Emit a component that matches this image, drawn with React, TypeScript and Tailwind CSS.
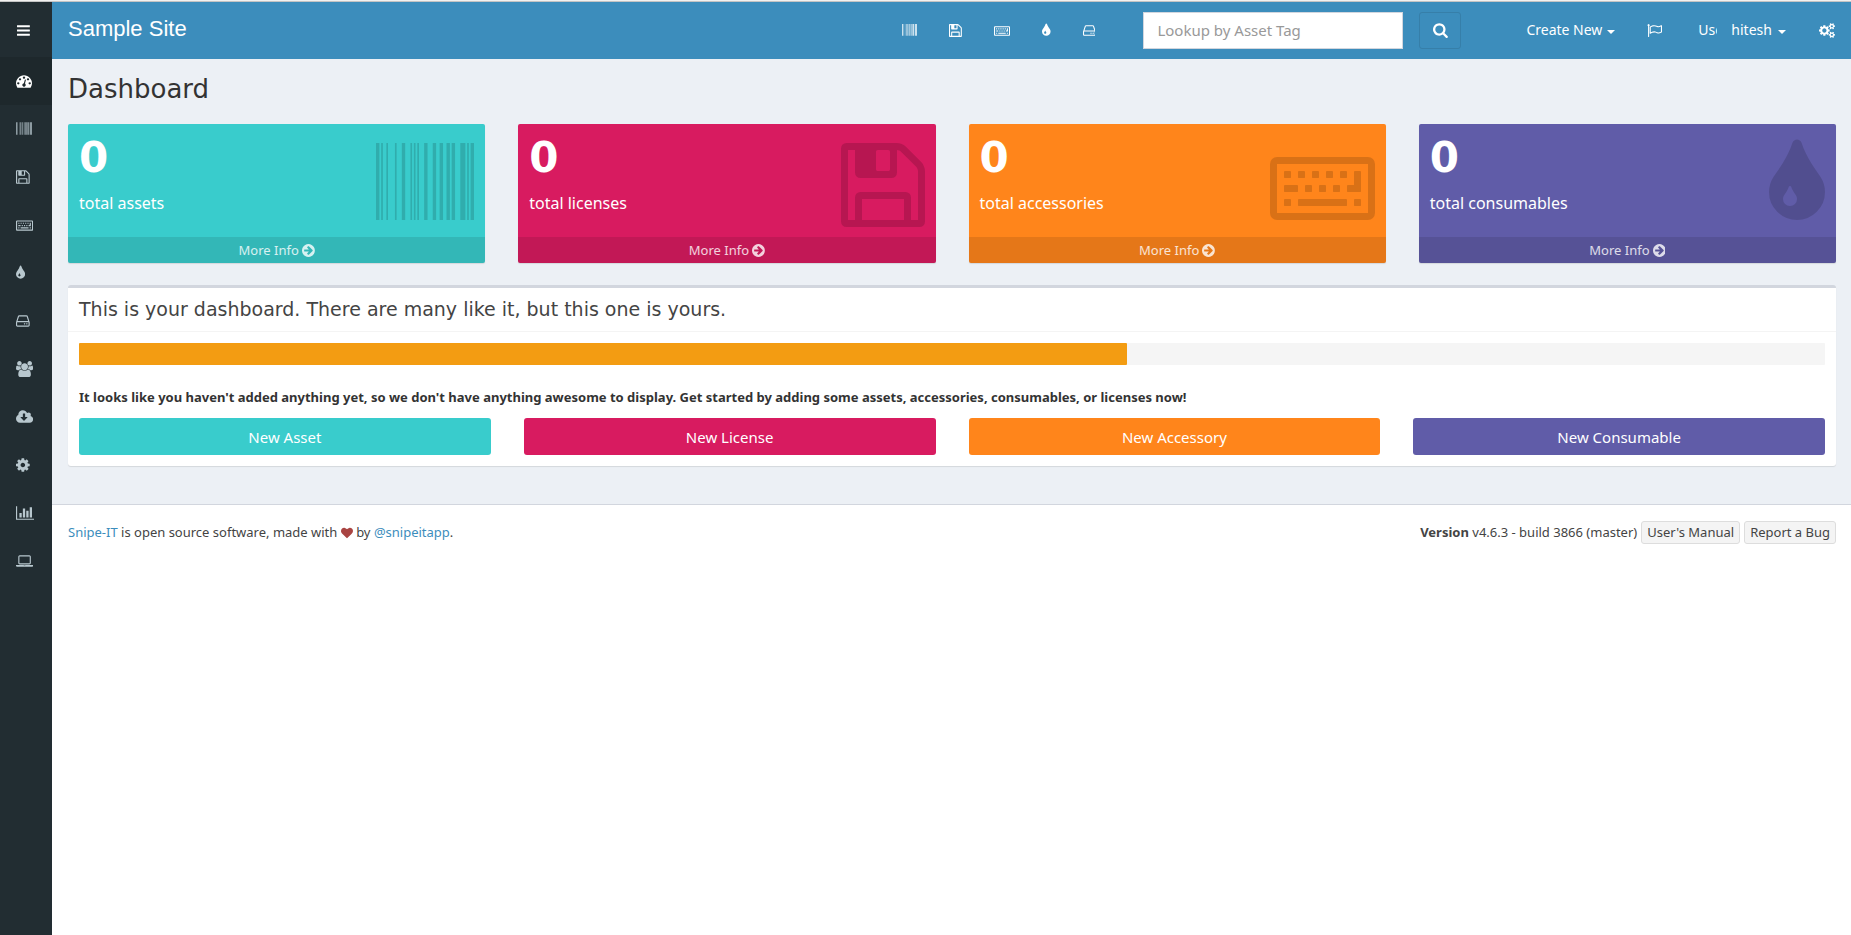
import React from "react";

type Glyph = { w: number; d: string };

const dot = (x: number, y: number) =>
  `M${x} ${y}v-96q0 -16 -16 -16h-96q-16 0 -16 16v96q0 16 16 16h96q16 0 16 -16z`;
const gauge = (x: number, y: number) =>
  `M${x} ${y}q0 53 -37.5 90.5t-90.5 37.5t-90.5 -37.5t-37.5 -90.5t37.5 -90.5t90.5 -37.5t90.5 37.5t37.5 90.5z`;
const line = (y: number) =>
  `M1536 ${y}v-128q0 -26 -19 -45t-45 -19h-1408q-26 0 -45 19t-19 45v128q0 26 19 45t45 19h1408q26 0 45 -19t19 -45z`;
const led = (x: number) =>
  `M${x} 320q0 -33 -23.5 -56.5t-56.5 -23.5t-56.5 23.5t-23.5 56.5t23.5 56.5t56.5 23.5t56.5 -23.5t23.5 -56.5z`;
const smallCog = (y: number) =>
  `M1920 ${y}v-140q0 -16 -149 -31q-12 -27 -30 -52q51 -113 51 -138q0 -4 -4 -7q-122 -71 -124 -71q-8 0 -46 47t-52 68q-20 -2 -30 -2t-30 2q-14 -21 -52 -68t-46 -47q-2 0 -124 71q-4 3 -4 7q0 25 51 138q-18 25 -30 52q-149 15 -149 31v140q0 16 149 31q13 29 30 52q-51 113 -51 138q0 4 4 7q4 2 35 20t59 34t30 16q8 0 46 -46.5t52 -67.5q20 2 30 2t30 -2q51 71 92 112l6 2q4 0 124 -70q4 -3 4 -7q0 -25 -51 -138q17 -23 30 -52q149 -15 149 -31z`;
const smallHole = (y: number) =>
  `M1664 ${y}q0 52 -38 90t-90 38t-90 -38t-38 -90q0 -53 37.5 -90.5t90.5 -37.5t90.5 37.5t37.5 90.5z`;

const glyphs = {
  bars: { w: 1536, d: line(192) + line(704) + line(1216) },
  dashboard: {
    w: 1792,
    d:
      gauge(384, 384) + gauge(576, 832) + gauge(1664, 384) + gauge(1024, 1024) + gauge(1472, 832) +
      "M1004 351l101 382q6 26 -7.5 48.5t-38.5 29.5t-48 -6.5t-30 -39.5l-101 -382q-60 -5 -107 -43.5t-63 -98.5q-20 -77 20 -146t117 -89t146 20t89 117q16 60 -6 117t-72 91zM1792 384q0 -261 -141 -483q-19 -29 -54 -29h-1402q-35 0 -54 29q-141 221 -141 483q0 182 71 348t191 286t286 191t348 71t348 -71t286 -191t191 -286t71 -348z",
  },
  barcode: {
    w: 1792,
    d: "M63 0h-63v1408h63v-1408zM126 1h-32v1407h32v-1407zM220 1h-31v1407h31v-1407zM377 1h-31v1407h31v-1407zM534 1h-62v1407h62v-1407zM660 1h-31v1407h31v-1407zM723 1h-31v1407h31v-1407zM786 1h-31v1407h31v-1407zM943 1h-63v1407h63v-1407zM1100 1h-63v1407h63v-1407zM1226 1h-63v1407h63v-1407zM1352 1h-63v1407h63v-1407zM1446 1h-63v1407h63v-1407zM1635 1h-94v1407h94v-1407zM1698 1h-32v1407h32v-1407zM1792 0h-63v1408h63v-1408z",
  },
  floppy: {
    w: 1536,
    d: "M384 0h768v384h-768v-384zM1280 0h128v896q0 14 -10 38.5t-20 34.5l-281 281q-10 10 -34 20t-39 10v-416q0 -40 -28 -68t-68 -28h-576q-40 0 -68 28t-28 68v416h-128v-1280h128v416q0 40 28 68t68 28h832q40 0 68 -28t28 -68v-416zM896 928v320q0 13 -9.5 22.5t-22.5 9.5h-192q-13 0 -22.5 -9.5t-9.5 -22.5v-320q0 -13 9.5 -22.5t22.5 -9.5h192q13 0 22.5 9.5t9.5 22.5zM1536 896v-928q0 -40 -28 -68t-68 -28h-1344q-40 0 -68 28t-28 68v1344q0 40 28 68t68 28h928q40 0 88 -20t76 -48l280 -280q28 -28 48 -76t20 -88z",
  },
  keyboard: {
    w: 1920,
    d:
      dot(384, 368) + dot(384, 880) + dot(640, 880) + dot(896, 880) + dot(1152, 880) + dot(1408, 880) +
      dot(768, 624) + dot(1024, 624) + dot(1280, 624) + dot(1664, 368) +
      "M512 624v-96q0 -16 -16 -16h-224q-16 0 -16 16v96q0 16 16 16h224q16 0 16 -16zM1408 368v-96q0 -16 -16 -16h-864q-16 0 -16 16v96q0 16 16 16h864q16 0 16 -16zM1664 880v-352q0 -16 -16 -16h-224q-16 0 -16 16v96q0 16 16 16h112v240q0 16 16 16h96q16 0 16 -16zM1792 128v896h-1664v-896h1664zM1920 1024v-896q0 -53 -37.5 -90.5t-90.5 -37.5h-1664q-53 0 -90.5 37.5t-37.5 90.5v896q0 53 37.5 90.5t90.5 37.5h1664q53 0 90.5 -37.5t37.5 -90.5z",
  },
  tint: {
    w: 1024,
    d: "M512 384q0 36 -20 69q-1 1 -15.5 22.5t-25.5 38t-25 44t-21 50.5q-4 16 -21 16t-21 -16q-7 -23 -21 -50.5t-25 -44t-25.5 -38t-15.5 -22.5q-20 -33 -20 -69q0 -53 37.5 -90.5t90.5 -37.5t90.5 37.5t37.5 90.5zM1024 512q0 -212 -150 -362t-362 -150t-362 150t-150 362q0 145 81 275q6 9 62.5 90.5t101 151t99.5 178t83 201.5q9 30 34 47t51 17t51.5 -17t33.5 -47q28 -93 83 -201.5t99.5 -178t101 -151t62.5 -90.5q81 -127 81 -275z",
  },
  hdd: {
    w: 1536,
    d:
      led(1040) + led(1296) +
      "M1408 160v320q0 13 -9.5 22.5t-22.5 9.5h-1216q-13 0 -22.5 -9.5t-9.5 -22.5v-320q0 -13 9.5 -22.5t22.5 -9.5h1216q13 0 22.5 9.5t9.5 22.5zM178 640h1180l-157 482q-4 13 -16 21.5t-26 8.5h-782q-14 0 -26 -8.5t-16 -21.5zM1536 480v-320q0 -66 -47 -113t-113 -47h-1216q-66 0 -113 47t-47 113v320q0 25 16 75l197 606q17 53 63 86t101 33h782q55 0 101 -33t63 -86l197 -606q16 -50 16 -75z",
  },
  users: {
    w: 1920,
    d: "M593 640q-162 -5 -265 -128h-134q-82 0 -138 40.5t-56 118.5q0 353 124 353q6 0 43.5 -21t97.5 -42.5t119 -21.5q67 0 133 23q-5 -37 -5 -66q0 -139 81 -256zM1664 3q0 -120 -73 -189.5t-194 -69.5h-874q-121 0 -194 69.5t-73 189.5q0 53 3.5 103.5t14 109t26.5 108.5t43 97.5t62 81t85.5 53.5t111.5 20q10 0 43 -21.5t73 -48t107 -48t135 -21.5t135 21.5t107 48t73 48t43 21.5q61 0 111.5 -20t85.5 -53.5t62 -81t43 -97.5t26.5 -108.5t14 -109t3.5 -103.5zM640 1280q0 -106 -75 -181t-181 -75t-181 75t-75 181t75 181t181 75t181 -75t75 -181zM1344 896q0 -159 -112.5 -271.5t-271.5 -112.5t-271.5 112.5t-112.5 271.5t112.5 271.5t271.5 112.5t271.5 -112.5t112.5 -271.5zM1920 671q0 -78 -56 -118.5t-138 -40.5h-134q-103 123 -265 128q81 117 81 256q0 29 -5 66q66 -23 133 -23q59 0 119 21.5t97.5 42.5t43.5 21q124 0 124 -353zM1792 1280q0 -106 -75 -181t-181 -75t-181 75t-75 181t75 181t181 75t181 -75t75 -181z",
  },
  cloud: {
    w: 1920,
    d: "M1280 608q0 14 -9 23t-23 9h-224v352q0 13 -9.5 22.5t-22.5 9.5h-192q-13 0 -22.5 -9.5t-9.5 -22.5v-352h-224q-13 0 -22.5 -9.5t-9.5 -22.5q0 -14 9 -23l352 -352q9 -9 23 -9t23 9l351 351q10 12 10 24zM1920 384q0 -159 -112.5 -271.5t-271.5 -112.5h-1088q-185 0 -316.5 131.5t-131.5 316.5q0 130 70 240t188 165q-2 30 -2 43q0 212 150 362t362 150q156 0 285.5 -87t188.5 -231q71 62 166 62q106 0 181 -75t75 -181q0 -76 -41 -138q130 -31 213.5 -135.5t83.5 -238.5z",
  },
  cog: {
    w: 1536,
    d: "M1024 640q0 106 -75 181t-181 75t-181 -75t-75 -181t75 -181t181 -75t181 75t75 181zM1536 749v-222q0 -12 -8 -23t-20 -13l-185 -28q-19 -54 -39 -91q35 -50 107 -138q10 -12 10 -25t-9 -23q-27 -37 -99 -108t-94 -71q-12 0 -26 9l-138 108q-44 -23 -91 -38q-16 -136 -29 -186q-7 -28 -36 -28h-222q-14 0 -24.5 8.5t-11.5 21.5l-28 184q-49 16 -90 37l-141 -107q-10 -9 -25 -9q-14 0 -25 11q-126 114 -165 168q-7 10 -7 23q0 12 8 23q15 21 51 66.5t54 70.5q-27 50 -41 99l-183 27q-13 2 -21 12.5t-8 23.5v222q0 12 8 23t19 13l186 28q14 46 39 92q-40 57 -107 138q-10 12 -10 24q0 10 9 23q26 36 98.5 107.5t94.5 71.5q13 0 26 -10l138 -107q44 23 91 38q16 136 29 186q7 28 36 28h222q14 0 24.5 -8.5t11.5 -21.5l28 -184q49 -16 90 -37l142 107q9 9 24 9q13 0 25 -10q129 -119 165 -170q7 -8 7 -22q0 -12 -8 -23q-15 -21 -51 -66.5t-54 -70.5q26 -50 41 -98l183 -28q13 -2 21 -12.5t8 -23.5z",
  },
  chart: {
    w: 2048,
    d: "M640 640v-512h-256v512h256zM1024 1152v-1024h-256v1024h256zM2048 0v-128h-2048v1536h128v-1408h1920zM1408 896v-768h-256v768h256zM1792 1280v-1152h-256v1152h256z",
  },
  laptop: {
    w: 1920,
    d: "M416 256q-66 0 -113 47t-47 113v704q0 66 47 113t113 47h1088q66 0 113 -47t47 -113v-704q0 -66 -47 -113t-113 -47h-1088zM384 1120v-704q0 -13 9.5 -22.5t22.5 -9.5h1088q13 0 22.5 9.5t9.5 22.5v704q0 13 -9.5 22.5t-22.5 9.5h-1088q-13 0 -22.5 -9.5t-9.5 -22.5zM1760 192h160v-96q0 -40 -47 -68t-113 -28h-1600q-66 0 -113 28t-47 68v96h160h1600zM1040 96q16 0 16 16t-16 16h-160q-16 0 -16 -16t16 -16h160z",
  },
  search: {
    w: 1664,
    d: "M1152 704q0 185 -131.5 316.5t-316.5 131.5t-316.5 -131.5t-131.5 -316.5t131.5 -316.5t316.5 -131.5t316.5 131.5t131.5 316.5zM1664 -128q0 -52 -38 -90t-90 -38q-54 0 -90 38l-343 342q-179 -124 -399 -124q-143 0 -273.5 55.5t-225 150t-150 225t-55.5 273.5t55.5 273.5t150 225t225 150t273.5 55.5t273.5 -55.5t225 -150t150 -225t55.5 -273.5q0 -220 -124 -399l343 -343q37 -37 37 -90z",
  },
  flag: {
    w: 1792,
    d: "M1664 491v616q-169 -91 -306 -91q-82 0 -145 32q-100 49 -184 76.5t-178 27.5q-173 0 -403 -127v-599q245 113 433 113q55 0 103.5 -7.5t98 -26t77 -31t82.5 -39.5l28 -14q44 -22 101 -22q120 0 293 92zM320 1280q0 -35 -17.5 -64t-46.5 -46v-1266q0 -14 -9 -23t-23 -9h-64q-14 0 -23 9t-9 23v1266q-29 17 -46.5 46t-17.5 64q0 53 37.5 90.5t90.5 37.5t90.5 -37.5t37.5 -90.5zM1792 1216v-763q0 -39 -35 -57q-10 -5 -17 -9q-218 -116 -369 -116q-88 0 -158 35l-28 14q-64 33 -99 48t-91 29t-114 14q-102 0 -235.5 -44t-228.5 -102q-15 -9 -33 -9q-16 0 -32 8q-32 19 -32 56v742q0 35 31 55q35 21 78.5 42.5t114 52t152.5 49.5t155 19q112 0 209 -31t209 -86q38 -19 89 -19q122 0 310 112q22 12 31 17q31 16 62 -2q31 -20 31 -55z",
  },
  cogs: {
    w: 1920,
    d:
      "M896 640q0 106 -75 181t-181 75t-181 -75t-75 -181t75 -181t181 -75t181 75t75 181zM1280 731v-185q0 -10 -7 -19.5t-16 -10.5l-155 -24q-11 -35 -32 -76q34 -48 90 -115q7 -11 7 -20q0 -12 -7 -19q-23 -30 -82.5 -89.5t-78.5 -59.5q-11 0 -21 7l-115 90q-37 -19 -77 -31q-11 -108 -23 -155q-7 -24 -30 -24h-186q-11 0 -20 7.5t-10 17.5l-23 153q-34 10 -75 31l-118 -89q-7 -7 -20 -7q-11 0 -21 8q-144 133 -144 160q0 9 7 19q10 14 41 53t47 61q-23 44 -35 82l-152 24q-10 1 -17 9.5t-7 19.5v185q0 10 7 19.5t16 10.5l155 24q11 35 32 76q-34 48 -90 115q-7 11 -7 20q0 12 7 20q22 30 82 89t79 59q11 0 21 -7l115 -90q34 18 77 32q11 108 23 154q7 24 30 24h186q11 0 20 -7.5t10 -17.5l23 -153q34 -10 75 -31l118 89q8 7 20 7q11 0 21 -8q144 -133 144 -160q0 -8 -7 -19q-12 -16 -42 -54t-45 -60q23 -48 34 -82l152 -23q10 -2 17 -10.5t7 -19.5z" +
      smallHole(128) + smallHole(1152) + smallCog(198) + smallCog(1222),
  },
  arrow: {
    w: 1536,
    d: "M1285 640q0 27 -18 45l-91 91l-362 362q-18 18 -45 18t-45 -18l-91 -91q-18 -18 -18 -45t18 -45l189 -189h-502q-26 0 -45 -19t-19 -45v-128q0 -26 19 -45t45 -19h502l-189 -189q-19 -19 -19 -45t19 -45l91 -91q18 -18 45 -18t45 18l362 362l91 91q18 18 18 45zM1536 640q0 -209 -103 -385.5t-279.5 -279.5t-385.5 -103t-385.5 103t-279.5 279.5t-103 385.5t103 385.5t279.5 279.5t385.5 103t385.5 -103t279.5 -279.5t103 -385.5z",
  },
  heart: {
    w: 1792,
    d: "M896 -128q-26 0 -44 18l-624 602q-10 8 -27.5 26t-55.5 65.5t-68 97.5t-53.5 121t-23.5 138q0 220 127 344t351 124q62 0 126.5 -21.5t120 -58t95.5 -68.5t76 -68q36 36 76 68t95.5 68.5t120 58t126.5 21.5q224 0 351 -124t127 -344q0 -221 -229 -450l-623 -600q-18 -18 -44 -18z",
  },
} satisfies Record<string, Glyph>;

type IconName = keyof typeof glyphs;

function Icon({ name, className = "h-4" }: { name: IconName; className?: string }) {
  const g = glyphs[name];
  return (
    <svg viewBox={`0 0 ${g.w} 1792`} className={`w-auto shrink-0 ${className}`} fill="currentColor" fillRule="evenodd" aria-hidden="true">
      <path transform="translate(0 1536) scale(1 -1)" d={g.d} />
    </svg>
  );
}

const nav: { icon: IconName; label: string }[] = [
  { icon: "dashboard", label: "Dashboard" },
  { icon: "barcode", label: "Assets" },
  { icon: "floppy", label: "Licenses" },
  { icon: "keyboard", label: "Accessories" },
  { icon: "tint", label: "Consumables" },
  { icon: "hdd", label: "Components" },
  { icon: "users", label: "People" },
  { icon: "cloud", label: "Import" },
  { icon: "cog", label: "Settings" },
  { icon: "chart", label: "Reports" },
  { icon: "laptop", label: "Requestable" },
];

const cards: { label: string; icon: IconName; bg: string; action: string }[] = [
  { label: "total assets", icon: "barcode", bg: "bg-[#39cccc]", action: "New Asset" },
  { label: "total licenses", icon: "floppy", bg: "bg-[#d81b60]", action: "New License" },
  { label: "total accessories", icon: "keyboard", bg: "bg-[#ff851b]", action: "New Accessory" },
  { label: "total consumables", icon: "tint", bg: "bg-[#605ca8]", action: "New Consumable" },
];

function Caret() {
  return <span className="mt-1 border-x-4 border-t-4 border-x-transparent border-t-white" />;
}

function Sidebar() {
  return (
    <aside className="flex w-[52px] shrink-0 flex-col bg-[#222d32] text-[#b8c7ce]">
      <button aria-label="Toggle navigation" className="flex h-[55px] items-center pl-[17px] pt-px text-white">
        <Icon name="bars" className="h-[15px]" />
      </button>
      <nav className="flex flex-col">
        {nav.map((n, i) => (
          <a key={n.icon} href="#" aria-label={n.label} className={`flex h-12 items-center pl-4 ${i === 0 ? "bg-[#1e282c] text-white" : ""}`}>
            <Icon name={n.icon} />
          </a>
        ))}
      </nav>
    </aside>
  );
}

function Header() {
  return (
    <header className="flex h-[57px] items-center bg-[#3c8dbc] px-4 pb-px text-sm text-white">
      <a href="#" className="pb-[2px] font-['Liberation_Sans',sans-serif] text-[22px] leading-[30px]">Sample Site</a>
      <nav className="ml-auto flex items-center">
        <div className="flex items-center gap-8">
          {(["barcode", "floppy", "keyboard", "tint", "hdd"] as IconName[]).map((n) => (
            <a key={n} href="#" aria-label={n}><Icon name={n} className="h-[15px]" /></a>
          ))}
        </div>
        <form className="ml-12 flex items-center gap-4" onSubmit={(e) => e.preventDefault()}>
          <input aria-label="Lookup by Asset Tag" placeholder="Lookup by Asset Tag" className="h-[37px] w-[260px] border border-[#d2d6de] bg-white px-[13px] text-[15px] text-[#555] placeholder:text-[#999] placeholder:opacity-100" />
          <button aria-label="Search" className="flex h-[37px] w-[42px] items-center justify-center rounded-[3px] border border-[#367fa9]">
            <Icon name="search" className="h-4" />
          </button>
        </form>
        <button className="ml-[65px] flex items-center gap-[5px]">Create New <Caret /></button>
        <a href="#" aria-label="Requests" className="ml-8"><Icon name="flag" className="h-[15px]" /></a>
        <button className="ml-9 flex items-center">
          <span className="w-[19px] overflow-hidden whitespace-nowrap text-left">User</span>
          <span className="ml-[14px] mr-[6px]">hitesh</span>
          <Caret />
        </button>
        <a href="#" aria-label="Admin" className="ml-[33px]"><Icon name="cogs" className="h-[15px]" /></a>
      </nav>
    </header>
  );
}

export default function App() {
  return (
    <div className="flex min-h-screen flex-col bg-white font-['Noto_Sans',sans-serif] text-[13px] text-[#333]">
      <div className="h-[2px] border-b border-[#c4c4c4] bg-[#f2f1f0]" />
      <div className="flex grow">
        <Sidebar />
        <div className="min-w-0 grow">
          <Header />
          <main className="bg-[#ecf0f5] pb-[38px] pl-4 pr-[15px] pt-[13px]">
            <h1 className="font-['DejaVu_Sans',sans-serif] text-[26px] leading-[34px]">Dashboard</h1>
            <div className="mt-[18px] grid grid-cols-4 gap-[33px]">
              {cards.map((c) => (
                <section key={c.label} className={`relative overflow-hidden rounded-[2px] text-white shadow-[0_1px_1px_rgba(0,0,0,0.1)] ${c.bg}`}>
                  <div className="h-[113px] px-[11px] pt-[11px]">
                    <p className="font-['DejaVu_Sans',sans-serif] text-[42px] font-bold leading-[46px]">0</p>
                    <p className="mt-[10px] text-base leading-6">{c.label}</p>
                  </div>
                  <div className="absolute right-[11px] top-3 text-black/15">
                    <Icon name={c.icon} className="h-[98px]" />
                  </div>
                  <a href="#" className="flex h-[26px] items-center justify-center gap-[3px] bg-black/10 pt-px text-white/80">
                    More Info <Icon name="arrow" className="h-[15px]" />
                  </a>
                </section>
              ))}
            </div>
            <section className="mt-[22px] rounded-[3px] border-t-3 border-[#d2d6de] bg-white shadow-[0_1px_1px_rgba(0,0,0,0.1)]">
              <h2 className="border-b border-[#f4f4f4] px-[11px] py-[10px] font-['DejaVu_Sans',sans-serif] text-[19px] leading-[23px] text-[#444]">
                This is your dashboard. There are many like it, but this one is yours.
              </h2>
              <div className="p-[11px]">
                <div role="progressbar" aria-valuenow={60} aria-label="Setup progress" className="h-[22px] rounded-[1px] bg-[#f5f5f5]">
                  <div className="h-full w-3/5 rounded-[1px] bg-[#f39c12]" />
                </div>
                <p className="mt-[22px] font-bold leading-5">
                  It looks like you haven't added anything yet, so we don't have anything awesome to display. Get started by adding some assets, accessories, consumables, or licenses now!
                </p>
                <div className="mt-[11px] grid grid-cols-4 gap-[33px]">
                  {cards.map((c) => (
                    <button key={c.action} className={`h-[37px] rounded-[3px] pt-px text-[15px] text-white ${c.bg}`}>{c.action}</button>
                  ))}
                </div>
              </div>
            </section>
          </main>
          <footer className="flex items-center justify-between border-t border-[#d2d6de] pl-4 pr-[15px] pt-4 text-[#444]">
            <p>
              <a href="#" className="text-[#3c8dbc]">Snipe-IT</a> is open source software, made with{" "}
              <Icon name="heart" className="inline h-3 text-[#a94442]" /> by{" "}
              <a href="#" className="text-[#3c8dbc]">@snipeitapp</a>.
            </p>
            <div className="flex items-center gap-1">
              <p><b>Version</b> v4.6.3 - build 3866 (master)</p>
              <a href="#" className="rounded-[3px] border border-[#ddd] bg-[#f4f4f4] px-[5px] leading-[21px]">User's Manual</a>
              <a href="#" className="rounded-[3px] border border-[#ddd] bg-[#f4f4f4] px-[5px] leading-[21px]">Report a Bug</a>
            </div>
          </footer>
        </div>
      </div>
    </div>
  );
}
